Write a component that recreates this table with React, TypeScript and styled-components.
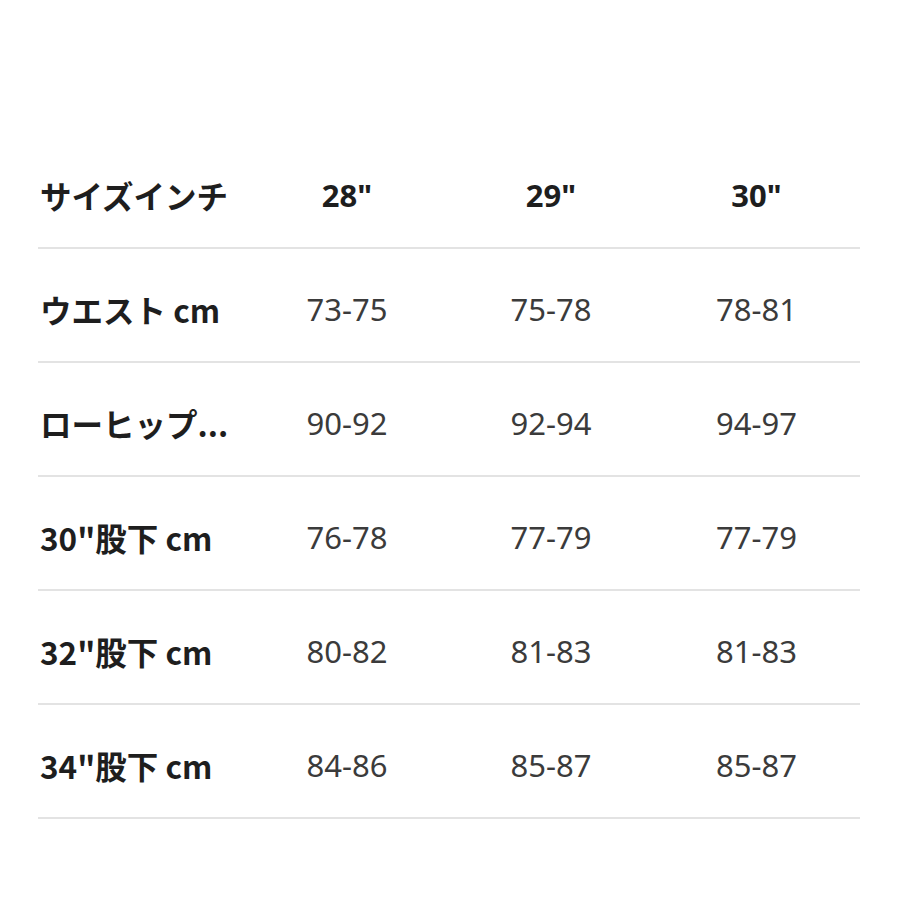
import styled, { createGlobalStyle } from "styled-components";

const HEADERS = ['28"', '29"', '30"'];

const ROWS = [
  { label: "ウエスト cm", values: ["73-75", "75-78", "78-81"] },
  { label: "ローヒップ...", values: ["90-92", "92-94", "94-97"] },
  { label: '30"股下 cm', values: ["76-78", "77-79", "77-79"] },
  { label: '32"股下 cm', values: ["80-82", "81-83", "81-83"] },
  { label: '34"股下 cm', values: ["84-86", "85-87", "85-87"] },
];

const GlobalStyle = createGlobalStyle`
  html, body {
    margin: 0;
    padding: 0;
    background: #fff;
  }
  body {
    font-family: "Noto Sans", "Noto Sans CJK JP", sans-serif;
  }
`;

const App: React.FC = () => {
  return (
    <>
      <GlobalStyle />
      <Page>
        <Table>
          <Row>
            <Label>サイズインチ</Label>
            {HEADERS.map((h) => (
              <Head key={h}>{h}</Head>
            ))}
          </Row>
          {ROWS.map((row) => (
            <Row key={row.label}>
              <Label>{row.label}</Label>
              {row.values.map((v, i) => (
                <Value key={i}>{v}</Value>
              ))}
            </Row>
          ))}
        </Table>
      </Page>
    </>
  );
};

const Page = styled.div`
  width: 900px;
  height: 900px;
  padding: 135px 0 0 38px;
  box-sizing: border-box;
`;

const Table = styled.div`
  width: 822px;
`;

const Row = styled.div`
  display: grid;
  grid-template-columns: 207px 204px 204px 1fr;
  align-items: center;
  height: 114px;
  box-sizing: border-box;
  padding-top: 8px;
  border-bottom: 2px solid #e3e3e3;
`;

const Label = styled.div`
  padding-left: 2px;
  font-family: "Noto Sans CJK JP", "Noto Sans", sans-serif;
  font-size: 31.5px;
  font-weight: 700;
  color: #1e1e1e;
  white-space: nowrap;
`;

const Cell = styled.div`
  text-align: center;
  font-family: "Noto Sans", "Noto Sans CJK JP", sans-serif;
  font-size: 31px;
`;

const Head = styled(Cell)`
  font-weight: 700;
  color: #1e1e1e;
`;

const Value = styled(Cell)`
  font-weight: 400;
  color: #3b3b3b;
`;

export default App;
